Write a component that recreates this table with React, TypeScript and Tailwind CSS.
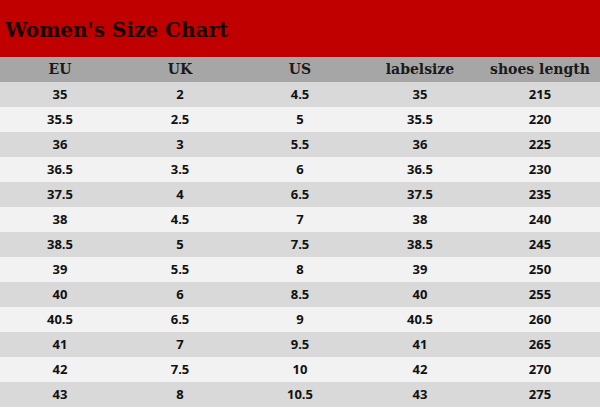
import React from "react";

const rows: string[][] = [
  ["35", "2", "4.5", "35", "215"],
  ["35.5", "2.5", "5", "35.5", "220"],
  ["36", "3", "5.5", "36", "225"],
  ["36.5", "3.5", "6", "36.5", "230"],
  ["37.5", "4", "6.5", "37.5", "235"],
  ["38", "4.5", "7", "38", "240"],
  ["38.5", "5", "7.5", "38.5", "245"],
  ["39", "5.5", "8", "39", "250"],
  ["40", "6", "8.5", "40", "255"],
  ["40.5", "6.5", "9", "40.5", "260"],
  ["41", "7", "9.5", "41", "265"],
  ["42", "7.5", "10", "42", "270"],
  ["43", "8", "10.5", "43", "275"],
];

const heads = ["EU", "UK", "US", "labelsize", "shoes length"];

export default function App() {
  return (
    <div className="w-[600px] h-[408px] overflow-hidden bg-white">
      <div className="h-[57px] bg-[#c00000] flex items-center pl-[5px] pt-[2px]">
        <span className="font-['DejaVu_Serif',serif] font-bold text-[20px] text-[#1a0505]">
          Women's Size Chart
        </span>
      </div>
      <div className="h-[25px] bg-[#a6a6a6] grid grid-cols-5 items-center">
        {heads.map((h) => (
          <div key={h} className="text-center font-['DejaVu_Serif',serif] font-bold text-[14px] text-[#1a1a1a]">
            {h}
          </div>
        ))}
      </div>
      {rows.map((r, i) => (
        <div
          key={i}
          className={`h-[25px] grid grid-cols-5 items-center ${i % 2 === 0 ? "bg-[#d9d9d9]" : "bg-[#f2f2f2]"}`}
        >
          {r.map((c, j) => (
            <div key={j} className="text-center font-['Open_Sans',sans-serif] font-bold text-[13px] text-[#111]">
              {c}
            </div>
          ))}
        </div>
      ))}
    </div>
  );
}
